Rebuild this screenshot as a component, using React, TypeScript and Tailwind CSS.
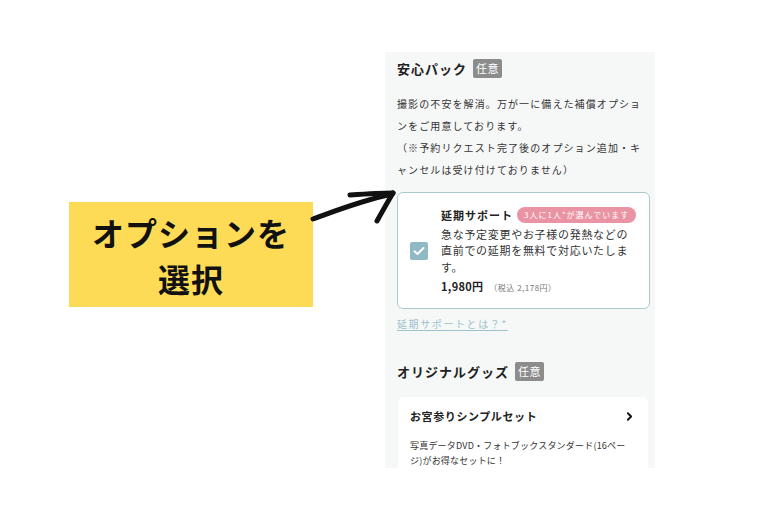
import { ChevronRight } from "lucide-react";

const JP = "font-['Noto_Sans_CJK_JP','Noto_Sans',sans-serif]";

function OptionalBadge() {
  return (
    <span className="ml-[6px] inline-flex h-[19px] items-center rounded-[2px] bg-[#8c8c8c] px-[3px] text-[11px] font-normal leading-none tracking-[0.5px] text-white">
      任意
    </span>
  );
}

function Arrow() {
  return (
    <svg
      className="absolute left-[305px] top-[185px]"
      width="100"
      height="45"
      viewBox="0 0 100 45"
      fill="none"
      stroke="#111"
      strokeWidth="5"
      strokeLinecap="round"
      strokeLinejoin="round"
    >
      <path d="M8 34 C30 26, 55 16, 87 9" />
      <path d="M45 10 C60 9, 75 8, 88 8" />
      <path d="M88 8 C82 18, 77 27, 72 36" />
    </svg>
  );
}

export default function App() {
  return (
    <div className={`relative h-[520px] w-[770px] overflow-hidden bg-white ${JP}`}>
      <div className="flex items-start">
        {/* annotation box */}
        <div className="ml-[69px] mt-[202px] flex h-[105px] w-[244px] flex-col items-center justify-center bg-[#fddb56] text-[32px] font-bold leading-[46px] tracking-[1px] text-[#111]">
          <span>オプションを</span>
          <span>選択</span>
        </div>

        {/* option panel */}
        <div className="ml-[72px] mt-[52px] h-[416px] w-[270px] overflow-hidden bg-[#f6f7f7] px-[12px] pt-[7px] text-[#333]">
          <div className="flex items-center text-[13px] font-bold leading-[18px] tracking-[1px] text-[#222]">
            安心パック
            <OptionalBadge />
          </div>
          <p className="mt-[15px] text-[10px] leading-[22px] tracking-[1.1px]">
            撮影の不安を解消。万が一に備えた補償オプションをご用意しております。
            <br />
            （※予約リクエスト完了後のオプション追加・キャンセルは受け付けておりません）
          </p>

          <div className="mt-[11px] flex h-[117px] w-[253px] items-center rounded-[6px] border border-[#a9c9cf] bg-white pl-[12px] pr-[6px]">
            <div className="flex h-[18px] w-[18px] shrink-0 items-center justify-center rounded-[2px] bg-[#8fb9c4]">
              <svg width="12" height="10" viewBox="0 0 12 10" fill="none" stroke="white" strokeWidth="2" strokeLinecap="round" strokeLinejoin="round">
                <path d="M1.5 5.2 L4.5 8 L10.5 2" />
              </svg>
            </div>
            <div className="ml-[13px] flex flex-col">
              <div className="flex items-center">
                <span className="text-[11px] font-bold leading-[16px] tracking-[1px] text-[#222]">延期サポート</span>
                <span className="ml-[4px] rounded-full bg-[#e993a4] px-[7px] py-[2px] text-[8px] leading-[12px] tracking-[1px] text-white">
                  3人に1人*が選んでいます
                </span>
              </div>
              <p className="mt-[3px] w-[192px] text-[11px] leading-[16.5px] tracking-[0.7px]">
                急な予定変更やお子様の発熱などの直前での延期を無料で対応いたします。
              </p>
              <div className="mt-[3px] flex items-baseline">
                <span className="text-[11px] font-bold tracking-[0.3px] text-[#222]">1,980円</span>
                <span className="ml-[6px] text-[8px] tracking-[0.5px] text-[#777]">（税込 2,178円）</span>
              </div>
            </div>
          </div>

          <a className="mt-[7px] inline-block text-[10px] leading-[16px] tracking-[1.6px] text-[#9cc3cc] underline underline-offset-2">
            延期サポートとは？*
          </a>

          <div className="mt-[29px] flex items-center text-[13px] font-bold leading-[18px] tracking-[1px] text-[#222]">
            オリジナルグッズ
            <OptionalBadge />
          </div>

          <div className="mt-[16px] ml-[1px] h-[90px] w-[250px] rounded-[6px] bg-white px-[12px] pt-[11px]">
            <div className="flex items-center justify-between">
              <span className="text-[11px] font-bold leading-[16px] tracking-[0.6px] text-[#222]">お宮参りシンプルセット</span>
              <ChevronRight size={13} strokeWidth={3.5} className="text-[#111]" />
            </div>
            <p className="mt-[14px] text-[9px] leading-[15px] tracking-[0.2px]">
              写真データDVD・フォトブックスタンダード(16ページ)がお得なセットに！
            </p>
          </div>
        </div>
      </div>
      <Arrow />
    </div>
  );
}
